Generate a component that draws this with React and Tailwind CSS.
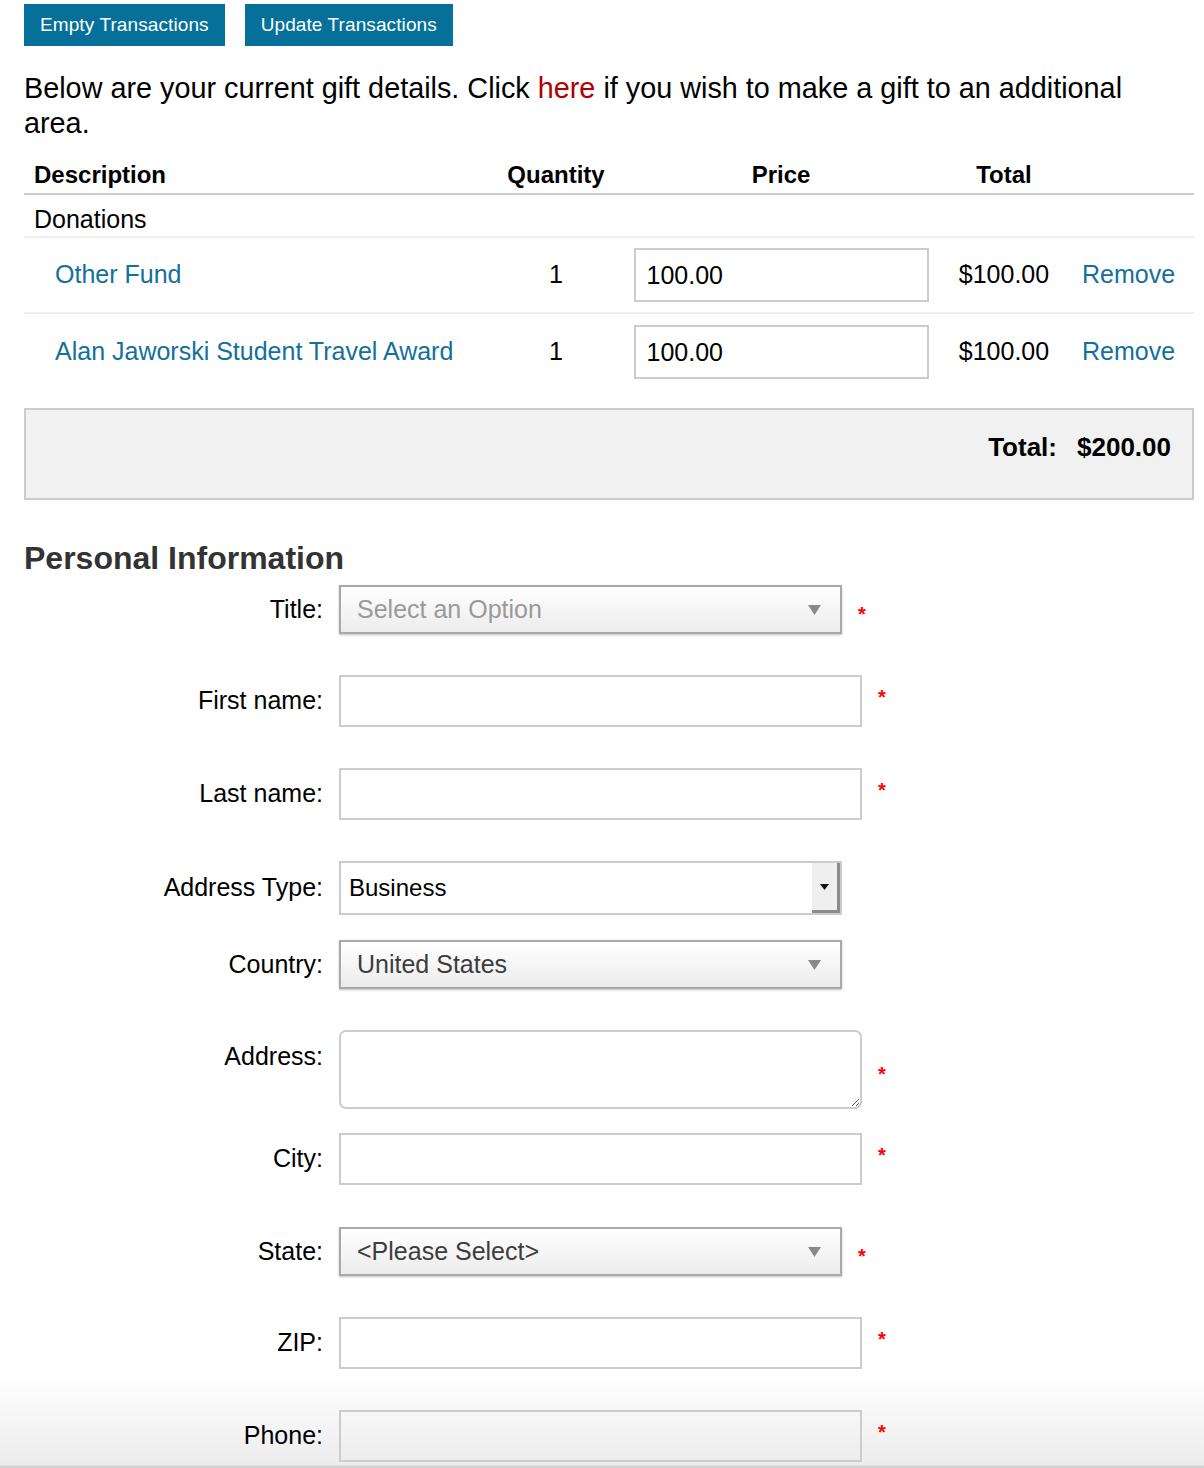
import { useState } from "react";

const font = { fontFamily: '"Liberation Sans", Arial, Helvetica, sans-serif' };

const gifts = [
  { id: 1, name: "Other Fund", qty: 1, price: "100.00", total: "$100.00" },
  { id: 2, name: "Alan Jaworski Student Travel Award", qty: 1, price: "100.00", total: "$100.00" },
];

function Star({ up }) {
  return (
    <span
      className={
        "ml-[16px] text-[20px] font-bold text-[#ff0000] leading-none " +
        (up ? "-translate-y-[4px]" : "translate-y-[4px]")
      }
    >
      *
    </span>
  );
}

function FancySelect({ value, placeholder }) {
  return (
    <div className="w-[503px] h-[49px] flex items-center justify-between border-2 border-[#a9a9a9] bg-gradient-to-b from-white to-[#ececec] shadow-[0_1px_2px_rgba(0,0,0,0.25)] pl-[16px] pr-[19px]">
      <span className={"text-[25px] " + (placeholder ? "text-[#9a9a9a]" : "text-[#3d3d3d]")}>
        {value}
      </span>
      <svg width="13" height="10" viewBox="0 0 13 10">
        <path d="M0 0 L13 0 L6.5 10 Z" fill="#8a8a8a" />
      </svg>
    </div>
  );
}

function Row({ label, children, mt, top }) {
  return (
    <div className={"flex " + (top ? "items-start " : "items-center ") + mt}>
      <label className={"w-[299px] text-right text-[25px] text-black " + (top ? "mt-[8px]" : "")}>
        {label}
      </label>
      <div className="ml-[16px] flex items-center">{children}</div>
    </div>
  );
}

function TextBox() {
  return (
    <input
      type="text"
      className="w-[523px] h-[52px] border-2 border-[#cccccc] bg-transparent outline-none"
    />
  );
}

export default function App() {
  const [rows] = useState(gifts);

  return (
    <div
      style={font}
      className="relative w-[1204px] h-[1468px] overflow-hidden bg-[linear-gradient(to_bottom,#ffffff_1375px,#ececec_1465px,#d2d2d2_1466px)] pl-[24px] pr-[10px] text-black"
    >
      {/* buttons */}
      <div className="flex gap-[20px] pt-[4px]">
        <button className="h-[42px] px-[16px] bg-[#05709a] text-white text-[19px] tracking-[0.1px]">Empty Transactions</button>
        <button className="h-[42px] px-[16px] bg-[#05709a] text-white text-[19px] tracking-[0.1px]">Update Transactions</button>
      </div>

      <p className="mt-[25px] pr-[30px] text-[28.8px] leading-[35px]">
        Below are your current gift details. Click <a className="text-[#b00000]">here</a> if you wish to make a gift to an additional area.
      </p>

      {/* gift table */}
      <div className="mt-[16px] text-[25px]">
        <div className="grid grid-cols-[462px_140px_310px_136px_122px] h-[38px] items-center border-b-2 border-[#cccccc] text-[24px] font-bold">
          <div className="pl-[10px]">Description</div>
          <div className="text-center">Quantity</div>
          <div className="text-center">Price</div>
          <div className="text-center">Total</div>
          <div></div>
        </div>
        <div className="h-[43px] pl-[10px] pt-[6px] border-b-2 border-[#eeeeee]">Donations</div>
        {rows.map((r) => (
          <div
            key={r.id}
            className="grid grid-cols-[462px_140px_310px_136px_122px] h-[76px] items-center border-b-2 border-[#eeeeee] last:border-b-0"
          >
            <a className="pl-[31px] text-[#13709a]">{r.name}</a>
            <div className="text-center">{r.qty}</div>
            <div className="flex justify-center">
              <input
                defaultValue={r.price}
                className="w-[295px] h-[54px] border-2 border-[#cccccc] pl-[11px] text-[25px] outline-none"
              />
            </div>
            <div className="text-center">{r.total}</div>
            <a className="pl-[10px] text-[#13709a]">Remove</a>
          </div>
        ))}
      </div>

      <div className="mt-[18px] h-[92px] border-2 border-[#cccccc] bg-[#f1f1f1] flex items-center justify-end pr-[21px] pb-[13px] text-[26px] font-bold">
        <span>Total:</span>
        <span className="ml-[20px]">$200.00</span>
      </div>

      {/* personal info */}
      <h2 className="mt-[40px] text-[32px] leading-[36px] font-bold text-[#333333]">Personal Information</h2>

      <Row label="Title:" mt="mt-[9px]">
        <FancySelect value="Select an Option" placeholder />
        <Star />
      </Row>

      <Row label="First name:" mt="mt-[41px]">
        <TextBox />
        <Star up />
      </Row>

      <Row label="Last name:" mt="mt-[41px]">
        <TextBox />
        <Star up />
      </Row>

      <Row label="Address Type:" mt="mt-[41px]">
        <div className="w-[503px] h-[54px] flex border-2 border-[#cccccc] bg-white">
          <span className="flex-1 pl-[8px] self-center text-[24px]">Business</span>
          <div className="w-[30px] bg-[#efefef] border-l-2 border-white shadow-[inset_-3px_-3px_0_#8c8c8c] flex items-center justify-center pb-[3px] pr-[3px]">
            <svg width="9" height="6" viewBox="0 0 9 6">
              <path d="M0 0 L9 0 L4.5 6 Z" fill="#111" />
            </svg>
          </div>
        </div>
      </Row>

      <Row label="Country:" mt="mt-[25px]">
        <FancySelect value="United States" />
      </Row>

      <Row label="Address:" mt="mt-[41px]" top>
        <textarea className="w-[523px] h-[79px] rounded-[7px] border-2 border-[#cccccc] outline-none" />
        <Star />
      </Row>

      <Row label="City:" mt="mt-[24px]">
        <TextBox />
        <Star up />
      </Row>

      <Row label="State:" mt="mt-[42px]">
        <FancySelect value="<Please Select>" />
        <Star />
      </Row>

      <Row label="ZIP:" mt="mt-[41px]">
        <TextBox />
        <Star up />
      </Row>

      <Row label="Phone:" mt="mt-[41px]">
        <TextBox />
        <Star up />
      </Row>
    </div>
  );
}
